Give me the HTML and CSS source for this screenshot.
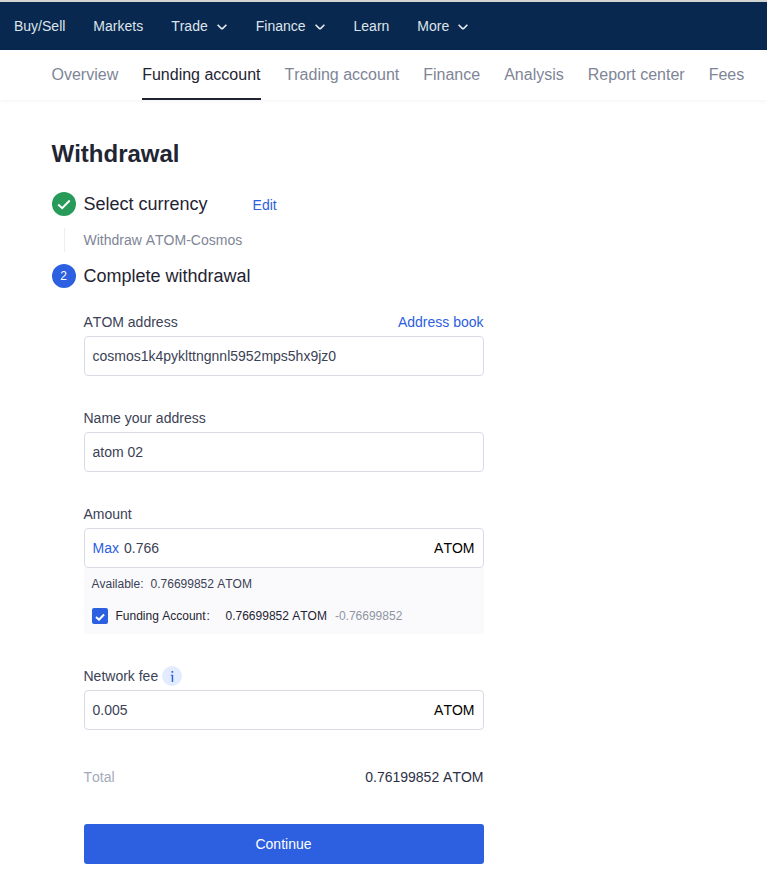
FILE: index.html
```html
<!DOCTYPE html>
<html lang="en">
<head>
<meta charset="utf-8">
<title>Withdrawal</title>
<link rel="stylesheet" href="styles.css">
</head>
<body>
<header class="topbar">
  <a class="nav">Buy/Sell</a>
  <a class="nav">Markets</a>
  <a class="nav">Trade<svg class="chev" viewBox="0 0 10 6"><path d="M.6.8 4.200 4.300Q5 5 5.800 4.300L9.400.8"/></svg></a>
  <a class="nav">Finance<svg class="chev" viewBox="0 0 10 6"><path d="M.6.8 4.200 4.300Q5 5 5.800 4.300L9.400.8"/></svg></a>
  <a class="nav">Learn</a>
  <a class="nav">More<svg class="chev" viewBox="0 0 10 6"><path d="M.6.8 4.200 4.300Q5 5 5.800 4.300L9.400.8"/></svg></a>
</header>
<nav class="tabs">
  <a class="tab">Overview</a>
  <a class="tab active">Funding account</a>
  <a class="tab">Trading account</a>
  <a class="tab">Finance</a>
  <a class="tab">Analysis</a>
  <a class="tab">Report center</a>
  <a class="tab">Fees</a>
</nav>
<main class="page">
  <h1 class="title">Withdrawal</h1>
  <div class="step">
    <span class="dot done"><svg class="tick" viewBox="0 0 14 11"><path d="M1.200 5.500 5.200 9.200 12.700 1.500"/></svg></span>
    <h2 class="step-name">Select currency</h2>
    <a class="link edit">Edit</a>
  </div>
  <div class="step-body"><span>Withdraw ATOM-Cosmos</span></div>
  <div class="step">
    <span class="dot current">2</span>
    <h2 class="step-name">Complete withdrawal</h2>
  </div>
  <form class="form">
    <section class="field">
      <div class="label"><span>ATOM address</span><a class="link">Address book</a></div>
      <div class="box"><span>cosmos1k4pyklttngnnl5952mps5hx9jz0</span></div>
    </section>
    <section class="field">
      <div class="label"><span>Name your address</span></div>
      <div class="box"><span>atom 02</span></div>
    </section>
    <section class="field">
      <div class="label"><span>Amount</span></div>
      <div class="box"><a class="link max">Max</a><span>0.766</span><span class="unit">ATOM</span></div>
      <div class="balance">
        <div class="available"><span>Available:</span><span>0.76699852 ATOM</span></div>
        <div class="account">
          <span class="check"><svg class="check-mark" viewBox="0 0 10 8"><path d="M1 4 4 6.700 9 1.500"/></svg></span>
          <span class="account-name">Funding Account<span class="colon">:</span></span>
          <span>0.76699852 ATOM</span>
          <span class="minus">-0.76699852</span>
        </div>
      </div>
    </section>
    <section class="field fee">
      <div class="label"><span>Network fee</span><span class="info"><svg class="info-mark" viewBox="0 0 4 11"><path d="M1.500 0h1.700v1.700H1.500zM.8 3.800h2.400V11H1.700V4.700H.8z"/></svg></span></div>
      <div class="box"><span>0.005</span><span class="unit">ATOM</span></div>
    </section>
    <div class="total"><span class="total-name">Total</span><span>0.76199852 ATOM</span></div>
    <button class="submit" type="button">Continue</button>
  </form>
</main>
</body>
</html>
```
FILE: styles.css
```css
* { box-sizing: border-box; }
body {
  margin: 0;
  font: 14px/20px "Liberation Sans", Arial, sans-serif;
  font-kerning: none;
  color: #3b4256;
  background: #fff;
}
.topbar {
  display: flex;
  gap: 28px;
  height: 50px;
  padding: 0 14px;
  border-top: 2px solid #d3d5d2;
  background: #08284f;
  color: #dfe4ea;
}
.nav { display: flex; align-items: center; white-space: nowrap; }
.chev {
  width: 10px;
  height: 6px;
  margin: 1px 1px 0 9px;
  fill: none;
  stroke: #e6eaef;
  stroke-width: 1.6;
}
.tabs {
  display: flex;
  gap: 24px;
  height: 50px;
  padding-left: 51.500px;
  font-size: 16px;
  line-height: 49px;
  color: #7e8596;
  box-shadow: 0 1px 4px rgba(0, 0, 0, .05);
}
.tab { white-space: nowrap; height: 50px; }
.active { color: #1f2433; border-bottom: 2px solid #1f2433; }
.page { padding: 38px 51.500px 0; }
.title { margin: 0; font-size: 24px; line-height: 32px; color: #1f2533; }
.step { display: flex; align-items: center; height: 24px; }
.title + .step { margin-top: 22px; }
.dot {
  display: flex;
  align-items: center;
  justify-content: center;
  width: 24px;
  height: 24px;
  margin-right: 8px;
  border-radius: 50%;
  font-size: 12px;
  color: #fff;
}
.done { background: #289b5a; }
.current { background: #2c60e0; }
.tick { width: 14px; height: 11px; fill: none; stroke: #fff; stroke-width: 2; }
.step-name { margin: 0; font-size: 18px; line-height: 24px; font-weight: 400; color: #1f2433; }
.link { color: #2c60e0; }
.edit { margin: 2px 0 0 45px; }
.step-body {
  display: flex;
  align-items: center;
  height: 24px;
  margin: 12px 0 12px 12px;
  padding-left: 19px;
  border-left: 1px solid #eceef4;
  color: #7e8596;
}
.form { width: 400px; margin: 24px 0 0 32px; }
.field { margin-bottom: 32px; }
.label { display: flex; justify-content: space-between; height: 20px; margin-bottom: 4px; }
.box {
  display: flex;
  align-items: center;
  height: 40px;
  padding: 0 8px;
  border: 1px solid #d8dae6;
  border-radius: 4px;
  background: #fff;
}
.max { margin-right: 5px; }
.unit { margin-left: auto; color: #000; }
.balance {
  height: 66px;
  padding: 6px 8px 0;
  background: #fafafc;
  font-size: 12px;
}
.available { display: flex; gap: 7px; }
.account { display: flex; align-items: center; height: 20px; margin-top: 12px; color: #1f2433; }
.check {
  display: flex;
  align-items: center;
  justify-content: center;
  width: 16px;
  height: 16px;
  margin-right: 8px;
  border-radius: 2px;
  background: #2c60e0;
}
.check-mark { width: 10px; height: 8px; margin-top: 1px; fill: none; stroke: #fff; stroke-width: 2; }
.account-name { width: 110px; }
.colon { margin-left: 1px; }
.minus { margin-left: 8px; color: #8f95a3; }
.fee .label { justify-content: flex-start; gap: 4px; }
.info {
  display: flex;
  align-items: center;
  justify-content: center;
  width: 20px;
  height: 20px;
  border-radius: 50%;
  background: #e3ebff;
}
.info-mark { width: 4px; height: 11px; margin-top: 1px; fill: #2c60e0; }
.total { display: flex; justify-content: space-between; margin-top: 37px; color: #2c3044; }
.total-name { color: #a4aabb; }
.submit {
  width: 100%;
  height: 40px;
  margin-top: 37px;
  border: 0;
  border-radius: 3px;
  background: #2c60e0;
  color: #fff;
  font: inherit;
}
```
